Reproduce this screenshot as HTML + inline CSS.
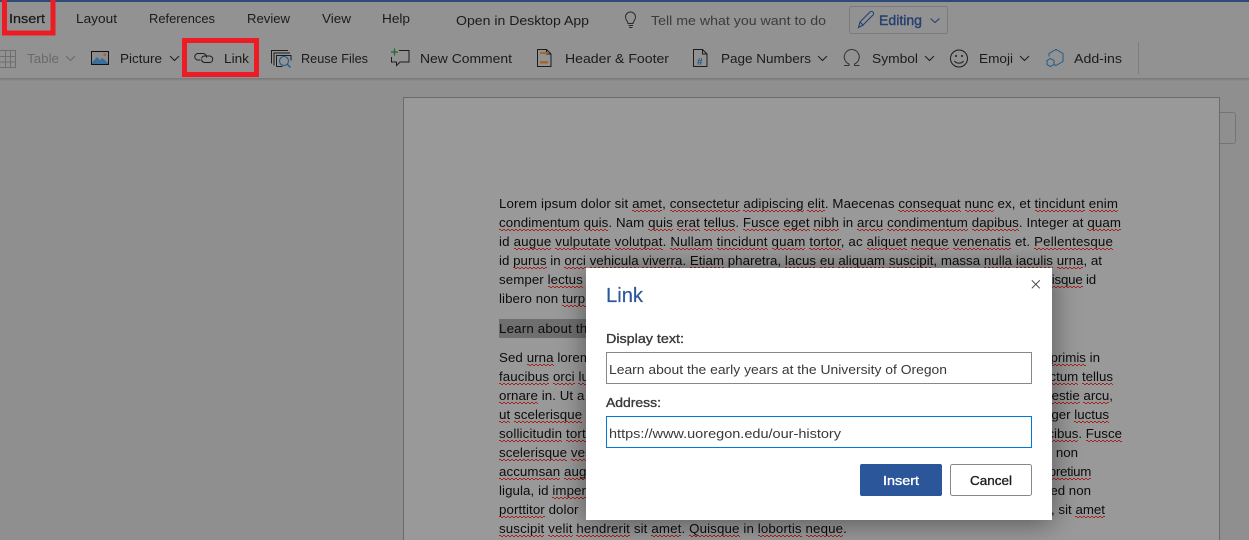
<!DOCTYPE html>
<html><head><meta charset="utf-8"><style>
html,body{margin:0;padding:0;width:1249px;height:540px;overflow:hidden;background:#8f8f8f}
svg{display:block;font-family:"Liberation Sans",sans-serif;position:absolute;left:0;top:0}
.t{font-size:13.2px;fill:#1c1b1a}
.m{font-size:13.2px;fill:#3a3938}
.s{font-size:13.3px;stroke-width:.35px}
#doc{position:absolute;left:0;top:0;width:1249px;height:540px;overflow:hidden;font-family:"Liberation Sans",sans-serif}
.l{position:absolute;left:499px;white-space:nowrap;font-size:13.3px;line-height:19px;color:#0c0c0c;letter-spacing:.08px}
.r{position:absolute;white-space:nowrap;font-size:13.3px;line-height:19px;color:#0c0c0c}
#doc u{text-decoration:none;padding-bottom:3px;background-image:repeating-linear-gradient(90deg,#a8201c 0 2px,transparent 2px 4px),repeating-linear-gradient(90deg,transparent 0 2px,#a8201c 2px 4px);background-size:100% 1px;background-position:0 14px,0 15px;background-repeat:no-repeat}
</style></head><body>
<svg width="1249" height="540" viewBox="0 0 1249 540" xmlns="http://www.w3.org/2000/svg">
<defs>
<linearGradient id="sh" x1="0" y1="0" x2="0" y2="1"><stop offset="0" stop-color="#777"/><stop offset="1" stop-color="#8f8f8f"/></linearGradient>
</defs>
<rect width="1249" height="540" fill="#8f8f8f"/>
<rect width="1249" height="78" fill="#929292"/>
<rect y="78" width="1249" height="3" fill="url(#sh)"/>
<rect width="1249" height="2" fill="#2e4a78"/>

<!-- tabs -->
<g class="t">
<text x="9" y="23" textLength="36" lengthAdjust="spacingAndGlyphs" stroke="#1c1b1a" stroke-width=".25">Insert</text>
<text x="76" y="23" textLength="41" lengthAdjust="spacingAndGlyphs">Layout</text>
<text x="149" y="23" textLength="66" lengthAdjust="spacingAndGlyphs">References</text>
<text x="247" y="23" textLength="43" lengthAdjust="spacingAndGlyphs">Review</text>
<text x="322" y="23" textLength="29" lengthAdjust="spacingAndGlyphs">View</text>
<text x="382" y="23" textLength="28" lengthAdjust="spacingAndGlyphs">Help</text>
<text x="456" y="25" textLength="133" lengthAdjust="spacingAndGlyphs">Open in Desktop App</text>
<text x="651" y="25" textLength="175" lengthAdjust="spacingAndGlyphs" style="fill:#3d3c3b">Tell me what you want to do</text>
</g>
<!-- bulb -->
<g fill="none" stroke="#2a2a2a" stroke-width="1"><path d="M628 23.5c0-2-2.500-3-2.500-6.500a5 5 0 0 1 10 0c0 3.500-2.500 4.500-2.500 6.500z"/><path d="M628.500 25.500h4.500M629 27.500h3.500"/></g>
<!-- editing -->
<rect x="849.500" y="6.500" width="98" height="27" rx="2" fill="none" stroke="#7b7b7b"/>
<g fill="none" stroke="#254171" stroke-width="1.100"><path d="M858.500 27.500l1.500-5.500 10-10a2 2 0 0 1 3 3l-10 10z"/><path d="M860 22l3.500 3.500"/><path d="M930.500 18.500l4.500 4 4.500-4"/></g>
<text x="879" y="25" font-size="13.400" fill="#254171" stroke="#254171" stroke-width=".4" textLength="43" lengthAdjust="spacingAndGlyphs">Editing</text>

<!-- ribbon -->
<g fill="none" stroke="#6f6f6f"><path d="M0 50.500h15.500v17H0M0 56.500h15.500M0 62h15.500M5.500 50.500v17M10.500 50.500v17"/></g>
<text x="27" y="63" font-size="13.200" fill="#6a6a6a" textLength="32" lengthAdjust="spacingAndGlyphs">Table</text>
<path d="M66 56l4.500 4.500 4.500-4.500" fill="none" stroke="#6a6a6a"/>
<rect x="91.500" y="51.500" width="17" height="13" fill="#8c8c8c" stroke="#111"/>
<path d="M92 64v-1.500l5-5.500 3 3 2-2 3 2 3 3v1z" fill="#3a6f9c"/>
<rect x="103.500" y="53.500" width="2.500" height="2.500" fill="#a5662a"/>
<g class="t">
<text x="120" y="63" textLength="42" lengthAdjust="spacingAndGlyphs">Picture</text>
<text x="224" y="63" textLength="25" lengthAdjust="spacingAndGlyphs">Link</text>
<text x="301" y="63" textLength="67" lengthAdjust="spacingAndGlyphs">Reuse Files</text>
<text x="420" y="63" textLength="92" lengthAdjust="spacingAndGlyphs">New Comment</text>
<text x="565" y="63" textLength="104" lengthAdjust="spacingAndGlyphs">Header &amp; Footer</text>
<text x="721" y="63" textLength="90" lengthAdjust="spacingAndGlyphs">Page Numbers</text>
<text x="872" y="63" textLength="46" lengthAdjust="spacingAndGlyphs">Symbol</text>
<text x="979" y="63" textLength="34" lengthAdjust="spacingAndGlyphs">Emoji</text>
<text x="1074" y="63" textLength="48" lengthAdjust="spacingAndGlyphs">Add-ins</text>
</g>
<g fill="none" stroke="#1c1c1c" stroke-width="1">
<path d="M170 56l4.500 4.500 4.500-4.500M818 56l4.500 4.500 4.500-4.500M925 56l4.500 4.500 4.500-4.500M1020 56l4.500 4.500 4.500-4.500"/>
<!-- link -->
<path d="M206.500 57.500a3.500 3.500 0 0 0-3.500-4h-5a3.250 3.250 0 0 0 0 6.500h2.500"/><path d="M201.500 58.500a3.500 3.500 0 0 1 3.500-2.500h4.500a3.250 3.250 0 0 1 0 6.500h-5a3.500 3.500 0 0 1-3-3"/>
<!-- reuse -->
<path d="M271.500 63.500V50.500H288M274 65.500V53h16M276.500 66.500V55.500H291v5M276.500 66.500h6"/>
<!-- comment -->
<path d="M399 50.500h10v11.500h-9l-3.500 3.500V62h-5v-5"/>
<!-- header -->
<path d="M537.500 49.500h9l4.500 4.500v12.500h-13.500z"/><path d="M546.500 49.500v4.500h4.500"/>
<!-- page numbers -->
<path d="M693.500 49.500h9l4.500 4.500v12.500h-13.500z"/><path d="M702.500 49.500v4.500h4.500"/>
<!-- omega -->
<path d="M844 65.500h5v-1.500a7.500 7.500 0 1 1 5.500 0v1.500h5" stroke="#333"/>
<!-- emoji -->
<circle cx="959" cy="58.500" r="8.500"/><path d="M954.500 61c1.500 2.800 7.500 2.800 9 0"/>
</g>
<g fill="none" stroke="#1c5a8c">
<path d="M1050.500 58.500l3.500 2v4l-3.500 2-3.500-2v-4z"/>
<path d="M1049 56.500v-3l7-4 7 4v8l-7 4-2.500-1"/>
<circle cx="284" cy="61" r="4.500" fill="#929292" stroke-width="1.100"/>
<path d="M287.500 64.500l3 3" stroke-width="1.300"/>
</g>
<path d="M391 52h7M394.500 48.500v7" stroke="#1f6b30" stroke-width="1.300" fill="none"/>
<rect x="540" y="52" width="8" height="2" fill="#a5662a"/><rect x="540" y="61" width="8" height="2.500" fill="#a5662a"/>
<text x="697" y="65" font-size="10" font-weight="700" fill="#1c5a8c">#</text>
<circle cx="956" cy="56" r="1" fill="#1c1c1c"/><circle cx="962" cy="56" r="1" fill="#1c1c1c"/>
<rect x="1138" y="42" width="1" height="32" fill="#7e7e7e"/>

<!-- page -->
<rect x="403.500" y="97.500" width="816" height="460" fill="#999" stroke="#6b6b6b"/>
<path d="M1220 112.500h13a2.500 2.500 0 0 1 2.500 2.500v26a2.500 2.500 0 0 1-2.500 2.500h-13" fill="none" stroke="#757575"/>
<rect x="499" y="319" width="110" height="19" fill="#6f6f6f"/>
</svg>

<div id="doc">
<div class="l f" style="top:194px;--w:619"><span>Lorem ipsum dolor sit <u>amet</u>, <u>consectetur</u> <u>adipiscing</u> <u>elit</u>. Maecenas <u>consequat</u> <u>nunc</u> ex, et <u>tincidunt</u> <u>enim</u></span></div>
<div class="l f" style="top:213px;--w:622"><span><u>condimentum</u> <u>quis</u>. Nam <u>quis</u> <u>erat</u> <u>tellus</u>. <u>Fusce</u> <u>eget</u> <u>nibh</u> in <u>arcu</u> <u>condimentum</u> <u>dapibus</u>. Integer at <u>quam</u></span></div>
<div class="l f" style="top:232px;--w:614"><span>id <u>augue</u> <u>vulputate</u> <u>volutpat</u>. <u>Nullam</u> <u>tincidunt</u> <u>quam</u> <u>tortor</u>, ac <u>aliquet</u> <u>neque</u> <u>venenatis</u> et. <u>Pellentesque</u></span></div>
<div class="l f" style="top:251px;--w:603"><span>id <u>purus</u> in <u>orci</u> <u>vehicula</u> <u>viverra</u>. <u>Etiam</u> pharetra, <u>lacus</u> <u>eu</u> <u>aliquam</u> <u>suscipit</u>, massa <u>nulla</u> <u>iaculis</u> <u>urna</u>, at</span></div>
<div class="l" style="top:270px">semper <u>lectus</u></div>
<div class="r" style="top:270px;right:153px;letter-spacing:-.2px"><u>scelerisque</u> id</div>
<div class="l" style="top:289px">libero non <u>turpis</u></div>
<div class="l" style="top:319px;letter-spacing:.18px">Learn about the</div>
<div class="l" style="top:348px">Sed <u>urna</u> lorem</div>
<div class="r" style="top:348px;right:149px"><u>primis</u> in</div>
<div class="l" style="top:367px"><u>faucibus</u> <u>orci</u> <u>luctus</u></div>
<div class="r" style="top:367px;right:136px"><u>dictum</u> <u>tellus</u></div>
<div class="l" style="top:386px"><u>ornare</u> in. Ut a</div>
<div class="r" style="top:386px;right:136px"><u>molestie</u> <u>arcu</u>,</div>
<div class="l" style="top:405px"><u>ut</u> <u>scelerisque</u></div>
<div class="r" style="top:405px;right:140px">Integer <u>luctus</u></div>
<div class="l" style="top:424px;letter-spacing:.15px"><u>sollicitudin</u> <u>tortor</u></div>
<div class="r" style="top:424px;right:127px"><u>faucibus</u>. <u>Fusce</u></div>
<div class="l" style="top:443px"><u>scelerisque</u> <u>vestibulum</u></div>
<div class="r" style="top:443px;right:171px">non</div>
<div class="l" style="top:462px"><u>accumsan</u> <u>augue</u></div>
<div class="r" style="top:462px;right:158px;letter-spacing:-.3px"><u>pretium</u></div>
<div class="l" style="top:481px">ligula, id <u>imperdiet</u></div>
<div class="r" style="top:481px;right:158px">sed non</div>
<div class="l" style="top:500px"><u>porttitor</u> dolor</div>
<div class="r" style="top:500px;right:144px">, sit <u>amet</u></div>
<div class="l f" style="top:519px;--w:348"><span><u>suscipit</u> <u>velit</u> <u>hendrerit</u> sit <u>amet</u>. <u>Quisque</u> in <u>lobortis</u> <u>neque</u>.</span></div>
</div>

<svg width="1249" height="540" viewBox="0 0 1249 540" xmlns="http://www.w3.org/2000/svg">
<defs><filter id="ds" x="-20%" y="-30%" width="140%" height="160%"><feDropShadow dx="0" dy="3" stdDeviation="14" flood-color="#000" flood-opacity=".45"/></filter></defs>
<!-- red highlights -->
<path d="M4.500 0v33h48.500V0" fill="none" stroke="#ed1c24" stroke-width="5"/>
<rect x="184.500" y="40.500" width="72" height="34" fill="none" stroke="#ed1c24" stroke-width="5"/>

<!-- dialog -->
<rect x="586" y="268" width="466" height="252" fill="#fff" filter="url(#ds)"/>
<text x="606" y="302" font-size="20" fill="#2b579a" stroke="#2b579a" stroke-width=".2" textLength="37" lengthAdjust="spacingAndGlyphs">Link</text>
<path d="M1031.800 280.300l8 8M1039.800 280.300l-8 8" stroke="#444" fill="none"/>
<text class="s" x="606" y="343" fill="#3a3938" stroke="#3a3938" textLength="78" lengthAdjust="spacingAndGlyphs">Display text:</text>
<rect x="606.500" y="352.500" width="425" height="31" fill="#fff" stroke="#8a8886"/>
<text class="m" x="609" y="374" textLength="338" lengthAdjust="spacingAndGlyphs">Learn about the early years at the University of Oregon</text>
<text class="s" x="606" y="407" fill="#3a3938" stroke="#3a3938" textLength="55" lengthAdjust="spacingAndGlyphs">Address:</text>
<rect x="606.500" y="416.500" width="425" height="31" fill="#fff" stroke="#0078d4"/>
<text class="m" x="609" y="438" textLength="232" lengthAdjust="spacingAndGlyphs">https://www.uoregon.edu/our-history</text>
<rect x="860" y="464" width="82" height="32" rx="2" fill="#2b579a"/>
<text class="s" x="883" y="485" fill="#fff" stroke="#fff" textLength="36" lengthAdjust="spacingAndGlyphs">Insert</text>
<rect x="950.500" y="464.500" width="81" height="31" rx="2" fill="#fff" stroke="#8a8886"/>
<text class="s" x="970" y="485" fill="#201f1e" stroke="#201f1e" textLength="42" lengthAdjust="spacingAndGlyphs">Cancel</text>
</svg>
<script>
document.querySelectorAll('.f').forEach(function(e){
var w=parseFloat(getComputedStyle(e).getPropertyValue('--w')),s=e.firstElementChild;
e.style.letterSpacing='0px';
var n=s.getBoundingClientRect().width;
e.style.letterSpacing=((w-n)/s.textContent.length)+'px';
});
</script>
</body></html>
